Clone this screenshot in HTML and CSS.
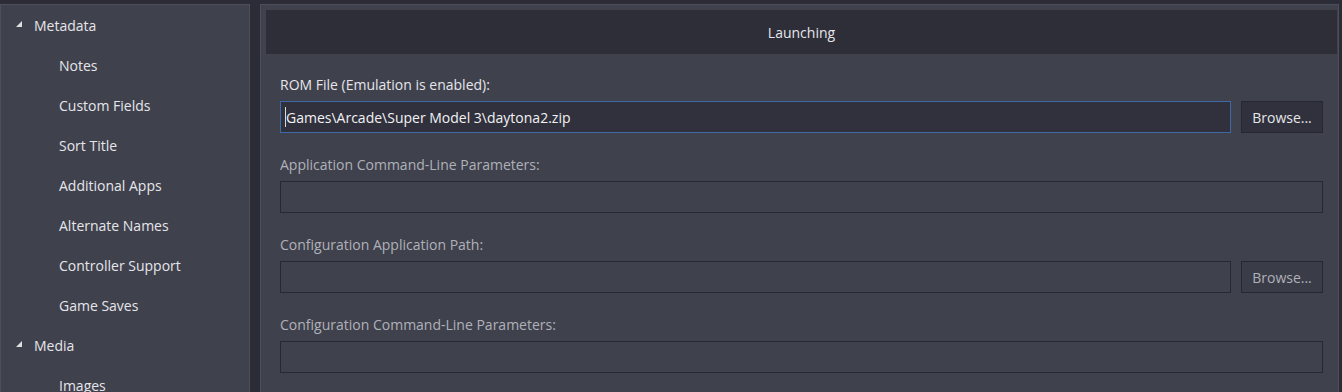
FILE: index.html
```html
<!DOCTYPE html>
<html lang="en">
<head>
    <meta charset="UTF-8">
    <title>Edit Game - Launching</title>
    <link rel="stylesheet" href="styles.css">
</head>
<body>
    <div class="window">
        <!-- Left navigation tree -->
        <div class="sidebar">
            <div class="tree-group">
                <svg class="expander" width="6" height="6" viewBox="0 0 6 6"><polygon points="6,0 6,6 0,6"/></svg>
                Metadata
            </div>
            <div class="tree-item">Notes</div>
            <div class="tree-item">Custom Fields</div>
            <div class="tree-item">Sort Title</div>
            <div class="tree-item">Additional Apps</div>
            <div class="tree-item">Alternate Names</div>
            <div class="tree-item">Controller Support</div>
            <div class="tree-item">Game Saves</div>
            <div class="tree-group">
                <svg class="expander" width="6" height="6" viewBox="0 0 6 6"><polygon points="6,0 6,6 0,6"/></svg>
                Media
            </div>
            <div class="tree-item">Images</div>
        </div>

        <!-- Launching settings -->
        <div class="content">
            <div class="section-header">Launching</div>
            <div class="form">
                <div class="field">
                    <label class="field-label">ROM File (Emulation is enabled):</label>
                    <div class="field-row">
                        <div class="text-input focused"><span class="caret"></span>Games\Arcade\Super Model 3\daytona2.zip</div>
                        <button class="browse-btn">Browse...</button>
                    </div>
                </div>
                <div class="field disabled">
                    <label class="field-label">Application Command-Line Parameters:</label>
                    <div class="field-row">
                        <div class="text-input"></div>
                    </div>
                </div>
                <div class="field disabled">
                    <label class="field-label">Configuration Application Path:</label>
                    <div class="field-row">
                        <div class="text-input"></div>
                        <button class="browse-btn">Browse...</button>
                    </div>
                </div>
                <div class="field disabled">
                    <label class="field-label">Configuration Command-Line Parameters:</label>
                    <div class="field-row">
                        <div class="text-input"></div>
                    </div>
                </div>
            </div>
        </div>
    </div>
</body>
</html>
```

FILE: styles.css
```css
body {
    margin: 0;
    background-color: #2b2c35;
    font-family: "Open Sans", "Noto Sans", sans-serif;
    font-size: 14px;
    color: #e6e6ea;
    overflow: hidden;
}

.window {
    display: flex;
    gap: 10px;
    padding-top: 4px;
    height: 388px;
}

/* Left tree */
.sidebar {
    width: 248px;
    flex-shrink: 0;
    background-color: #3f414d;
    border: 1px solid #4c4e5c;
    border-bottom: none;
}

.tree-group,
.tree-item {
    height: 40px;
    display: flex;
    align-items: center;
}

.tree-group {
    padding-left: 15px;
}

.expander {
    fill: #e0e0e4;
    margin-right: 12px;
    margin-top: -2px;
}

.tree-item {
    padding-left: 58px;
}

/* Right panel */
.content {
    width: 1071px;
    background-color: #3f414d;
    border: 1px solid #4c4e5c;
    border-bottom: none;
    padding: 5px 1px 0 5px;
}

.section-header {
    height: 44px;
    background-color: #2d2e38;
    display: flex;
    align-items: center;
    justify-content: center;
    padding-top: 1px;
    box-sizing: border-box;
    color: #e6e6ea;
}

.form {
    padding: 21px 14px 0 14px;
}

.field {
    margin-bottom: 22px;
}

.field-label {
    display: block;
    line-height: 20px;
    margin-bottom: 6px;
    color: #e6e6ea;
}

.field-row {
    display: flex;
    gap: 10px;
}

.text-input {
    flex: 1;
    height: 30px;
    border: 1px solid #272830;
    background-color: #3f414d;
    display: flex;
    align-items: center;
    padding-left: 4px;
    color: #f2f2f4;
}

.text-input.focused {
    border-color: #3d6aa6;
    background-color: #30313c;
}

.caret {
    width: 1px;
    height: 20px;
    background-color: #d8d8d8;
}

.browse-btn {
    width: 82px;
    height: 32px;
    border: 1px solid #26272f;
    background-color: #30313c;
    color: #e6e6ea;
    font-family: inherit;
    font-size: 14px;
    padding: 0;
}

.disabled .field-label,
.disabled .browse-btn {
    color: #b0b1b8;
}

.disabled .browse-btn {
    background-color: #3a3c48;
}
```
